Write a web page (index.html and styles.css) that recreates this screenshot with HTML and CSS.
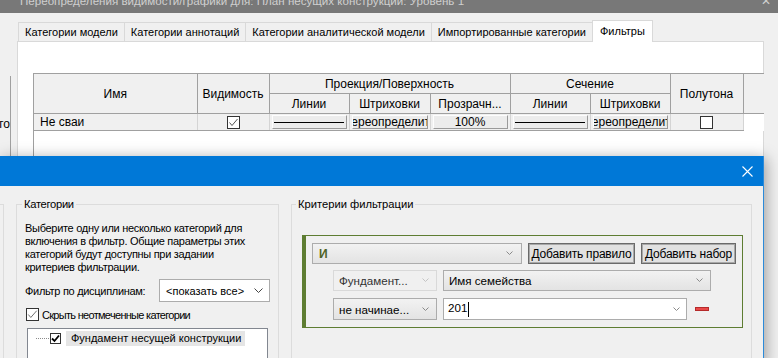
FILE: index.html
```html
<!DOCTYPE html>
<html lang="ru">
  <head>
    <meta charset="UTF-8" />
    <meta name="viewport" content="width=device-width, initial-scale=1.0" />
    <title>Фильтры</title>
    <link rel="stylesheet" href="styles.css">
  </head>
  <body>
    <!-- Background window: visibility/graphics overrides -->
    <div class="vg-window">
      <div class="vg-title">
        <span class="vg-title-text">Переопределения видимости/графики для: План несущих конструкций: Уровень 1</span>
        <span class="vg-close">✕</span>
      </div>
      <div class="tabs">
        <div class="tab">Категории модели</div>
        <div class="tab">Категории аннотаций</div>
        <div class="tab">Категории аналитической модели</div>
        <div class="tab">Импортированные категории</div>
        <div class="tab active">Фильтры</div>
      </div>
      <div class="tab-panel">
        <div class="grid">
          <table class="ftable">
            <colgroup>
              <col class="w-name" />
              <col class="w-vis" />
              <col class="w-col" />
              <col class="w-col2" />
              <col class="w-col" />
              <col class="w-col" />
              <col class="w-col" />
              <col class="w-half" />
              <col class="w-fill" />
            </colgroup>
            <tr>
              <th rowspan="2">Имя</th>
              <th rowspan="2">Видимость</th>
              <th colspan="3">Проекция/Поверхность</th>
              <th colspan="2">Сечение</th>
              <th rowspan="2">Полутона</th>
              <th rowspan="2" class="filler-head"></th>
            </tr>
            <tr>
              <th>Линии</th>
              <th>Штриховки</th>
              <th>Прозрачн...</th>
              <th>Линии</th>
              <th>Штриховки</th>
            </tr>
            <tr class="data-row">
              <td class="name">Не сваи</td>
              <td class="center">
                <span class="chk">
                  <svg width="11" height="11" viewBox="0 0 11 11"><polyline points="1.5,5.5 4,8.5 9.5,2" fill="none" stroke="#555" stroke-width="1"/></svg>
                </span>
              </td>
              <td><button class="cellbtn"><span class="stroke"></span></button></td>
              <td><button class="cellbtn">Переопределить</button></td>
              <td><button class="cellbtn">100%</button></td>
              <td><button class="cellbtn"><span class="stroke"></span></button></td>
              <td><button class="cellbtn">Переопределить</button></td>
              <td class="center"><span class="chk"></span></td>
              <td class="filler"></td>
            </tr>
          </table>
        </div>
      </div>
    </div>

    <div class="side-peek">ого</div>

    <!-- Foreground dialog: filters -->
    <div class="dialog">
      <div class="dlg-title">
        <svg width="11" height="11" viewBox="0 0 11 11"><path d="M0.5 0.5 L10.5 10.5 M10.5 0.5 L0.5 10.5" stroke="#fff" stroke-width="1.1"/></svg>
      </div>
      <div class="dlg-body">
        <div class="edge-group"></div>

        <fieldset class="group cats">
          <legend>Категории</legend>
          <p class="hint">Выберите одну или несколько категорий для<br>включения в фильтр. Общие параметры этих<br>категорий будут доступны при задании<br>критериев фильтрации.</p>
          <div class="discipline-row">
            <span class="discipline-label">Фильтр по дисциплинам:</span>
            <div class="select-white">
              <span>&lt;показать все&gt;</span>
              <svg width="9" height="6" viewBox="0 0 9 6"><polyline points="0.5,0.5 4.5,4.5 8.5,0.5" fill="none" stroke="#444" stroke-width="1"/></svg>
            </div>
          </div>
          <label class="check-row">
            <span class="chk big">
              <svg width="13" height="13" viewBox="0 0 13 13"><polyline points="1.5,6.5 4.5,10 11.5,2" fill="none" stroke="#555" stroke-width="1"/></svg>
            </span>
            <span class="check-label">Скрыть неотмеченные категории</span>
          </label>
          <div class="tree">
            <div class="tree-item">
              <span class="dots"></span>
              <span class="chk small">
                <svg width="9" height="9" viewBox="0 0 9 9"><polyline points="1,4.5 3.5,7 8,1.5" fill="none" stroke="#000" stroke-width="1.8"/></svg>
              </span>
              <span class="tree-label">Фундамент несущей конструкции</span>
            </div>
          </div>
        </fieldset>

        <fieldset class="group criteria">
          <legend>Критерии фильтрации</legend>
          <div class="ruleset">
            <div class="rule-row">
              <div class="combo and">
                <span class="and-text">И</span>
                <svg width="7" height="5" viewBox="0 0 7 5"><polyline points="0.5,0.5 3.5,3.5 6.5,0.5" fill="none" stroke="#8a8a8a" stroke-width="1"/></svg>
              </div>
              <button class="rule-btn add-rule">Добавить правило</button>
              <button class="rule-btn add-set">Добавить набор</button>
            </div>
            <div class="rule-row indent">
              <div class="combo short disabled">
                <span>Фундамент...</span>
                <svg width="7" height="5" viewBox="0 0 7 5"><polyline points="0.5,0.5 3.5,3.5 6.5,0.5" fill="none" stroke="#c4c4c4" stroke-width="1"/></svg>
              </div>
              <div class="combo param">
                <span>Имя семейства</span>
                <svg width="7" height="5" viewBox="0 0 7 5"><polyline points="0.5,0.5 3.5,3.5 6.5,0.5" fill="none" stroke="#8a8a8a" stroke-width="1"/></svg>
              </div>
            </div>
            <div class="rule-row indent third">
              <div class="combo short">
                <span>не начинае...</span>
                <svg width="7" height="5" viewBox="0 0 7 5"><polyline points="0.5,0.5 3.5,3.5 6.5,0.5" fill="none" stroke="#8a8a8a" stroke-width="1"/></svg>
              </div>
              <div class="combo value">
                <span class="value-text">201<span class="caret"></span></span>
                <svg width="7" height="5" viewBox="0 0 7 5"><polyline points="0.5,0.5 3.5,3.5 6.5,0.5" fill="none" stroke="#8a8a8a" stroke-width="1"/></svg>
              </div>
              <span class="remove"></span>
            </div>
          </div>
        </fieldset>
      </div>
    </div>
  </body>
</html>
```

FILE: styles.css
```css
* {
  box-sizing: border-box;
}

body {
  margin: 0;
  width: 778px;
  height: 358px;
  overflow: hidden;
  position: relative;
  background: #f0f0f0;
  font-family: "Segoe UI", "Liberation Sans", Arial, sans-serif;
  font-size: 12px;
  color: #000;
}

/* background window */

.vg-title {
  height: 13px;
  background: #787878;
  display: flex;
  justify-content: space-between;
  overflow: hidden;
  padding: 0 7px 0 20px;
  font-size: 11.6px;
}

.vg-title-text,
.vg-close {
  margin-top: -6px;
  line-height: 14px;
  color: #cfcfcf;
  white-space: nowrap;
}

.tabs {
  display: flex;
  align-items: flex-end;
  height: 21px;
  margin-top: 7px;
  padding-left: 18px;
  font-size: 11px;
}

.tab {
  height: 19px;
  padding: 0 6px;
  margin-left: -1px;
  border: 1px solid #d9d9d9;
  border-bottom: none;
  background: #f0f0f0;
  line-height: 18px;
  white-space: nowrap;
}

.tab:first-child {
  margin-left: 0;
}

.tab.active {
  height: 22px;
  margin-bottom: -1px;
  padding: 1px 7px 0;
  background: #fff;
  position: relative;
  z-index: 2;
}

.tab-panel {
  margin-left: 17px;
  width: 747px;
  height: 317px;
  background: #fff;
  border: 1px solid #d9d9d9;
  padding: 31px 0 0 15px;
}

.grid {
  height: 200px;
  border-left: 1px solid #a0a0a0;
}

.ftable {
  border-collapse: collapse;
  table-layout: fixed;
  width: 729px;
}

.w-name { width: 163px; }
.w-vis { width: 72px; }
.w-col { width: 80px; }
.w-col2 { width: 81px; }
.w-half { width: 73px; }
.w-fill { width: 21px; }

th {
  height: 20px;
  padding: 0;
  background: #f0f0f0;
  border: 1px solid #a0a0a0;
  font-weight: normal;
  white-space: nowrap;
  overflow: hidden;
}

th:first-child {
  border-left: none;
}

th.filler-head {
  border-right: none;
}

td {
  height: 17px;
  padding: 1px 2px;
  background: #f0f0f0;
  border-bottom: 1px solid #a0a0a0;
  border-right: 1px solid #d4d4d4;
}

td.name {
  padding-left: 6px;
}

td.center {
  text-align: center;
}

td.filler {
  background: #fff;
  border: none;
}

.chk {
  display: inline-flex;
  align-items: center;
  justify-content: center;
  flex: none;
  width: 13px;
  height: 13px;
  border: 1px solid #333;
  background: #fff;
  vertical-align: middle;
}

.chk.small {
  width: 11px;
  height: 11px;
}

.cellbtn {
  display: flex;
  align-items: center;
  justify-content: center;
  width: 100%;
  height: 14px;
  padding: 0;
  border: 1px solid;
  border-color: #fdfdfd #9a9a9a #9a9a9a #fdfdfd;
  background: #ececec;
  font: inherit;
  color: #000;
  white-space: nowrap;
  overflow: hidden;
}

.stroke {
  flex: none;
  width: 70px;
  height: 1px;
  background: #000;
}

.side-peek {
  position: absolute;
  left: 0;
  top: 76px;
  width: 11px;
  height: 80px;
  border-right: 1px solid #a0a0a0;
  background: #f0f0f0;
  padding-top: 41px;
  overflow: hidden;
  white-space: nowrap;
  direction: rtl;
  line-height: 14px;
}

/* foreground dialog */

.dialog {
  position: absolute;
  left: 0;
  top: 156px;
  width: 764px;
  height: 210px;
  background: #f0f0f0;
  border-right: 1px solid #2b8ad9;
  box-shadow: 2px 2px 14px rgba(0, 0, 0, 0.35);
  font-size: 11px;
}

.dlg-title {
  height: 30px;
  background: #0078d7;
  display: flex;
  justify-content: flex-end;
  align-items: center;
  padding-right: 10px;
}

.dlg-body {
  display: flex;
  align-items: flex-start;
  padding-top: 11px;
}

.edge-group {
  width: 4px;
  height: 200px;
  margin-top: 7px;
  border-top: 1px solid #dcdcdc;
  border-right: 1px solid #dcdcdc;
}

.group {
  margin: 0 0 0 12px;
  min-width: 0;
  height: 200px;
  border: 1px solid #dcdcdc;
}

.group legend {
  padding: 0 2px;
  margin-left: -3px;
  line-height: 14px;
  font-size: 11.2px;
}

.cats {
  width: 263px;
  padding: 11px 8px 0 8px;
  letter-spacing: -0.3px;
}

.hint {
  margin: 0;
  line-height: 13px;
  white-space: nowrap;
}

.discipline-row {
  display: flex;
  align-items: center;
  gap: 5px;
  margin-top: 5px;
  white-space: nowrap;
}

.discipline-label {
  flex: 1;
}

.select-white {
  flex: none;
  width: 111px;
  height: 23px;
  border: 1px solid #acacac;
  background: #fff;
  display: flex;
  align-items: center;
  justify-content: space-between;
  padding: 0 6px;
  letter-spacing: 0;
}

.check-row {
  display: flex;
  align-items: center;
  gap: 3px;
  margin: 6px 0 0 1px;
  white-space: nowrap;
}

.check-label {
  letter-spacing: -0.7px;
}

.tree {
  margin: 7px 0 0 2px;
  width: 241px;
  height: 40px;
  border: 1px solid #828790;
  background: #fff;
  padding: 2px 0 0 8px;
}

.tree-item {
  display: flex;
  align-items: center;
  white-space: nowrap;
}

.dots {
  flex: none;
  width: 13px;
  border-top: 1px dotted #8a8a8a;
  margin-right: 1px;
}

.tree-label {
  margin-left: 5px;
  padding: 1px 4px 1px 5px;
  width: 179px;
  background: #e5e5e5;
  line-height: 13px;
  letter-spacing: 0;
}

.criteria {
  width: 461px;
  padding: 24px 0 0 10px;
}

.criteria legend {
  margin-left: -6px;
}

.ruleset {
  width: 441px;
  border: 1px solid #5e7d32;
  border-left-width: 4px;
  padding: 7px 6px 7px 6px;
  font-size: 11.6px;
}

.rule-row {
  display: flex;
  align-items: center;
  gap: 6px;
  height: 21px;
}

.rule-row.indent {
  padding-left: 21px;
  margin-top: 6px;
}

.rule-row.third {
  margin-top: 7px;
  height: 22px;
}

.combo {
  height: 100%;
  display: flex;
  align-items: center;
  justify-content: space-between;
  padding: 0 7px 0 5px;
  border: 1px solid #acacac;
  background: linear-gradient(#f2f2f2, #e3e3e3);
  white-space: nowrap;
}

.combo.and {
  width: 210px;
  padding-left: 6px;
  padding-right: 8px;
}

.and-text {
  font-weight: bold;
  font-size: 12px;
  color: #4e6326;
}

.combo.short {
  width: 104px;
}

.combo.disabled {
  background: #f0f0f0;
  border-color: #d9d9d9;
  color: #333;
}

.combo.param {
  width: 268px;
}

.combo.value {
  width: 244px;
  background: #fff;
  padding-left: 4px;
  padding-right: 6px;
}

.caret {
  display: inline-block;
  width: 1px;
  height: 15px;
  margin-left: 1px;
  background: #000;
  vertical-align: middle;
}

.remove {
  margin-left: 2px;
  width: 14px;
  height: 4px;
  background: #e84848;
  border: 1px solid #b52a2a;
}

.rule-btn {
  height: 100%;
  padding: 0;
  border: 1px solid #6a6a6a;
  box-shadow: inset 0 0 0 1px #a8a8a8;
  background: #e1e1e1;
  font: inherit;
  font-size: 12px;
  letter-spacing: -0.2px;
  color: #000;
  white-space: nowrap;
}

.add-rule {
  width: 107px;
}

.add-set {
  width: 95px;
}
```
